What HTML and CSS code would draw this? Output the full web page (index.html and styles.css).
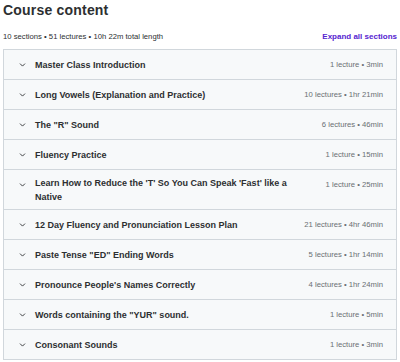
FILE: index.html
```html
<!DOCTYPE html>
<html lang="en">
<head>
  <meta charset="UTF-8">
  <title>Course content</title>
  <meta name="viewport" content="width=device-width, initial-scale=1.0">
  <link rel="stylesheet" href="styles.css">
</head>
<body>
  <div class="curriculum">
    <h2>Course content</h2>

    <div class="summary">
      <span>10 sections • 51 lectures • 10h 22m total length</span>
      <a href="#" class="expand">Expand all sections</a>
    </div>

    <div class="sections" id="sections"></div>
  </div>

  <script>
    const sections = [
      ["Master Class Introduction", "1 lecture • 3min"],
      ["Long Vowels (Explanation and Practice)", "10 lectures • 1hr 21min"],
      ["The \"R\" Sound", "6 lectures • 46min"],
      ["Fluency Practice", "1 lecture • 15min"],
      ["Learn How to Reduce the 'T' So You Can Speak 'Fast' like a Native", "1 lecture • 25min"],
      ["12 Day Fluency and Pronunciation Lesson Plan", "21 lectures • 4hr 46min"],
      ["Paste Tense \"ED\" Ending Words", "5 lectures • 1hr 14min"],
      ["Pronounce People's Names Correctly", "4 lectures • 1hr 24min"],
      ["Words containing the \"YUR\" sound.", "1 lecture • 5min"],
      ["Consonant Sounds", "1 lecture • 3min"]
    ];

    const list = document.getElementById("sections");
    const chevron = '<svg class="chevron" viewBox="0 0 7 4" width="7" height="4"><path d="M1 0.6l2.5 2.5 2.5-2.5" fill="none" stroke="#2d2f31" stroke-width="0.9"/></svg>';

    sections.forEach(s => {
      const row = document.createElement("div");
      row.className = "section";
      row.innerHTML = chevron +
        `<span class="section-title"></span><span class="section-meta"></span>`;
      row.querySelector(".section-title").textContent = s[0];
      row.querySelector(".section-meta").textContent = s[1];
      list.appendChild(row);
    });
  </script>
</body>
</html>
```

FILE: styles.css
```css
* { box-sizing: border-box; margin: 0; padding: 0; }
body {
  font-family: 'Liberation Sans', Arial, sans-serif;
  background: #ffffff;
  color: #2d2f31;
}
.curriculum {
  padding: 0 3px;
}
h2 {
  font-size: 14px;
  font-weight: 700;
  line-height: 20px;
  letter-spacing: 0.2px;
}
.summary {
  display: flex;
  justify-content: space-between;
  align-items: center;
  margin-top: 8px;
  height: 17px;
  font-size: 7.7px;
  color: #2d2f31;
}
.expand {
  color: #5624d0;
  font-weight: 700;
  font-size: 8px;
  text-decoration: none;
}
.sections {
  margin-top: 4px;
  border: 1px solid #d1d7dc;
  border-bottom: none;
}
.section {
  display: flex;
  align-items: center;
  background: #f7f9fa;
  border-bottom: 1px solid #d1d7dc;
  padding: 6px 13px 5px 15px;
  min-height: 30px;
}
.chevron {
  flex: none;
  align-self: flex-start;
  margin: 7px 9px 0 0;
}
.section-title {
  flex: 1;
  font-size: 9px;
  font-weight: 700;
  line-height: 14px;
  max-width: 255px;
}
.section-meta {
  margin: 1.5px 0 0 auto;
  padding-left: 16px;
  font-size: 7.7px;
  color: #6a6f73;
  white-space: nowrap;
  align-self: flex-start;
  line-height: 14px;
}
```
